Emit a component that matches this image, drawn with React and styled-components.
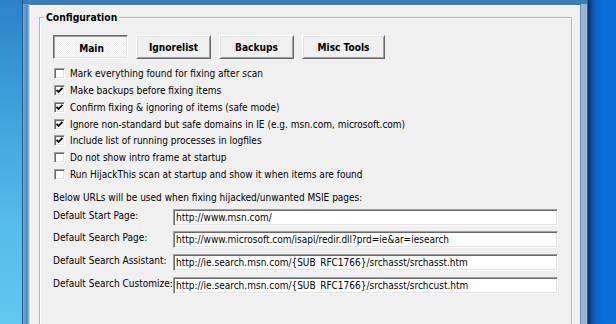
import React from "react";
import styled, { createGlobalStyle } from "styled-components";

const uiFont = `"DejaVu Sans Condensed", "DejaVu Sans", "Liberation Sans", sans-serif`;

const GlobalStyle = createGlobalStyle`
  html, body {
    margin: 0;
    padding: 0;
    overflow: hidden;
  }
  body {
    font-family: ${uiFont};
    font-size: 10px;
    color: #000;
  }
`;

const Desktop = styled.div`
  display: flex;
  width: 616px;
  height: 324px;
  overflow: hidden;
`;

const LeftWall = styled.div`
  width: 22px;
  flex: none;
  background: linear-gradient(to bottom, #2b82c9 0%, #3ea3dc 35%, #55bdea 70%, #63c7ef 100%);
`;

const RightWall = styled.div`
  flex: 1;
  background: linear-gradient(to right, #08306a 0px, #0a4fa8 4px, #0b66cf 9px, #0a6fd9 16px, #0b70d8 100%);
`;

const Window = styled.div`
  width: 566px;
  flex: none;
  display: flex;
  padding: 4px 7px 0 6px;
  box-sizing: border-box;
  border-left: 1px solid #24578a;
  border-right: 1px solid #3e6187;
  background:
    linear-gradient(to bottom, #3b7cbd 0, #3b7cbd 4px, transparent 4px),
    linear-gradient(to right, #6cb3e2 0, #4b86bb 4px, #9cb9d8 6px, #7ea2c8 40%, #97b5d6 100%);
`;

const Client = styled.div`
  flex: 1;
  display: flex;
  flex-direction: column;
  background: #f0f0f0;
  border-top: 1px solid #4f7196;
  border-left: 1px solid #c8d9ea;
  border-right: 1px solid #6d8fb2;
  box-shadow: inset 1px 1px 0 #fff;
  padding: 6px 8px 0 9px;
`;

const Group = styled.fieldset`
  margin: 0;
  padding: 11px 13px 0 13px;
  border: 1px solid #b4b4b4;
  border-bottom: none;
  box-shadow: inset 1px 1px 0 #fff, 1px 0 0 #fff;
  flex: 1;
  min-width: 0;
`;

const Legend = styled.legend`
  padding: 0 2px;
  margin-left: -9px;
  font-weight: bold;
  font-size: 10.3px;
  line-height: 13px;
`;

const TabRow = styled.div`
  display: flex;
  gap: 8px;
`;

const Tab = styled.button`
  width: ${(p) => (p.$wide ? 83 : 75)}px;
  height: 24px;
  padding: 0;
  font: bold 10.1px ${uiFont};
  color: #000;
  border: 1px solid;
  border-color: ${(p) => (p.$pressed ? "#696969 #fff #fff #696969" : "#fff #696969 #696969 #fff")};
  box-shadow: ${(p) =>
    p.$pressed
      ? "inset 1px 1px 0 #a0a0a0, inset -1px -1px 0 #e3e3e3"
      : "inset 1px 1px 0 #e3e3e3, inset -1px -1px 0 #a0a0a0"};
  background: ${(p) =>
    p.$pressed
      ? "repeating-conic-gradient(#ffffff 0 25%, #ececec 0 50%) 0 0 / 2px 2px"
      : "#f0f0f0"};
  padding-top: ${(p) => (p.$pressed ? 2 : 0)}px;
  padding-left: ${(p) => (p.$pressed ? 2 : 0)}px;
`;

const Options = styled.div`
  display: flex;
  flex-direction: column;
  margin-top: 6.5px;
  padding-left: 1px;
`;

const OptionRow = styled.label`
  display: flex;
  align-items: center;
  gap: 5px;
  height: 16.75px;
  white-space: nowrap;
`;

const Box = styled.span`
  width: 11px;
  height: 11px;
  box-sizing: border-box;
  flex: none;
  display: flex;
  align-items: center;
  justify-content: center;
  background: #fff;
  border: 1px solid;
  border-color: #a0a0a0 #fff #fff #a0a0a0;
  box-shadow: inset 1px 1px 0 #696969, inset -1px -1px 0 #e3e3e3;
`;

const Note = styled.div`
  margin-top: 8.4px;
  line-height: 13px;
  white-space: nowrap;
`;

const UrlGrid = styled.div`
  display: grid;
  grid-template-columns: 120px 385px;
  grid-auto-rows: 17px;
  row-gap: 5.67px;
  margin-top: 4.5px;
  align-items: center;
`;

const UrlLabel = styled.span`
  white-space: nowrap;
  margin-bottom: 4px;
`;

const UrlField = styled.input`
  height: 17px;
  box-sizing: border-box;
  margin: 0;
  padding: 1px 2px;
  font: 10px ${uiFont};
  line-height: 13px;
  color: #000;
  background: #fff;
  border: 1px solid;
  border-color: #a0a0a0 #fff #fff #a0a0a0;
  box-shadow: inset 1px 1px 0 #696969, inset -1px -1px 0 #e3e3e3;
  outline: none;
`;

function Check() {
  return (
    <svg width="7" height="7" viewBox="0 0 7 7">
      <path d="M0.5 3 L2.5 5 L6.5 1" fill="none" stroke="#000" strokeWidth="1.8" />
    </svg>
  );
}

const options = [
  ["Mark everything found for fixing after scan", false],
  ["Make backups before fixing items", true],
  ["Confirm fixing & ignoring of items (safe mode)", true],
  ["Ignore non-standard but safe domains in IE (e.g. msn.com, microsoft.com)", true],
  ["Include list of running processes in logfiles", true],
  ["Do not show intro frame at startup", false],
  ["Run HijackThis scan at startup and show it when items are found", false],
];

const urls = [
  ["Default Start Page:", "http://www.msn.com/"],
  ["Default Search Page:", "http://www.microsoft.com/isapi/redir.dll?prd=ie&ar=iesearch"],
  ["Default Search Assistant:", "http://ie.search.msn.com/{SUB_RFC1766}/srchasst/srchasst.htm"],
  ["Default Search Customize:", "http://ie.search.msn.com/{SUB_RFC1766}/srchasst/srchcust.htm"],
];

export default function App() {
  return (
    <>
      <GlobalStyle />
      <Desktop>
        <LeftWall />
        <Window>
          <Client>
            <Group>
              <Legend>Configuration</Legend>
              <TabRow>
                <Tab $pressed>Main</Tab>
                <Tab>Ignorelist</Tab>
                <Tab>Backups</Tab>
                <Tab $wide>Misc Tools</Tab>
              </TabRow>
              <Options>
                {options.map(([text, on]) => (
                  <OptionRow key={text}>
                    <Box>{on && <Check />}</Box>
                    {text}
                  </OptionRow>
                ))}
              </Options>
              <Note>Below URLs will be used when fixing hijacked/unwanted MSIE pages:</Note>
              <UrlGrid>
                {urls.map(([label, value]) => (
                  <React.Fragment key={label}>
                    <UrlLabel>{label}</UrlLabel>
                    <UrlField readOnly value={value} />
                  </React.Fragment>
                ))}
              </UrlGrid>
            </Group>
          </Client>
        </Window>
        <RightWall />
      </Desktop>
    </>
  );
}
